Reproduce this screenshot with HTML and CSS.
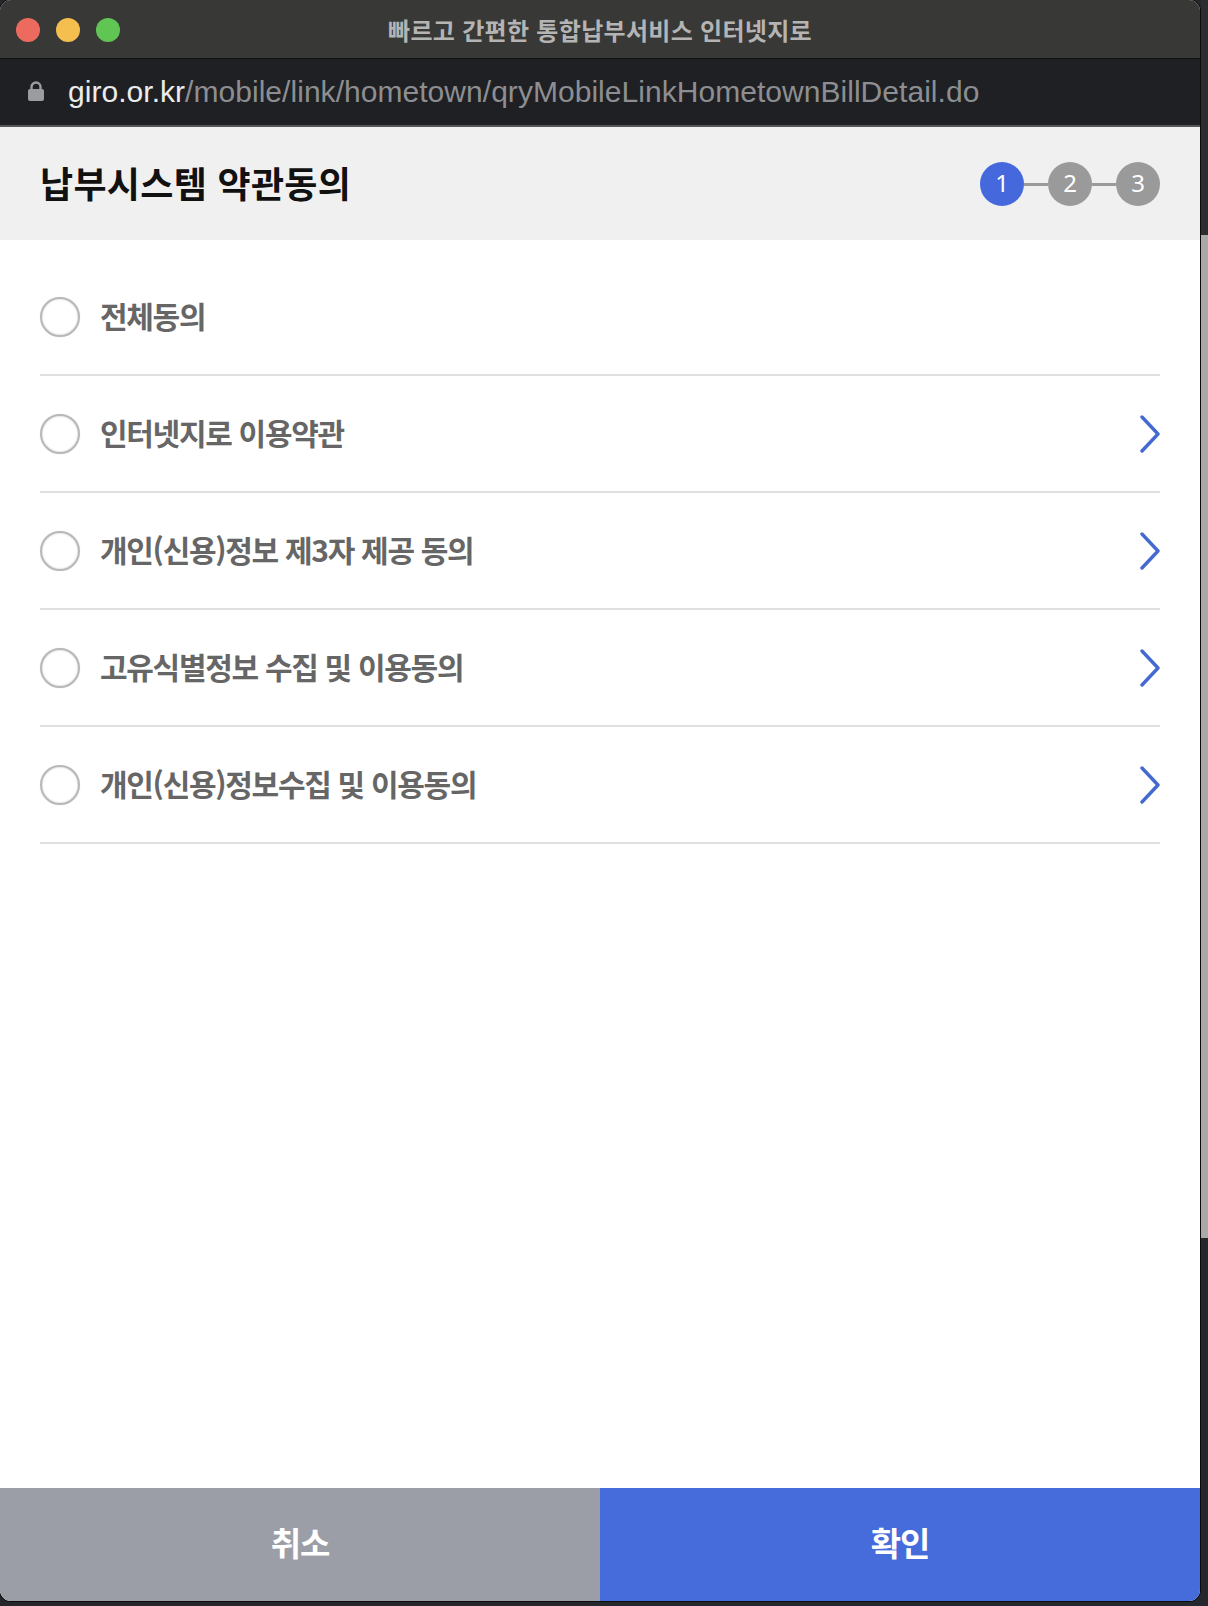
FILE: index.html
```html
<!DOCTYPE html>
<html lang="ko">
<head>
  <meta charset="utf-8">
  <meta name="viewport" content="width=device-width, initial-scale=1">
  <title>빠르고 간편한 통합납부서비스 인터넷지로</title>
  <link rel="stylesheet" href="styles.css">
</head>
<body>
  <div class="screen">
    <div class="window">
      <div class="titlebar">
        <div class="lights">
          <span class="light red"></span>
          <span class="light yellow"></span>
          <span class="light green"></span>
        </div>
        <div class="win-title">빠르고 간편한 통합납부서비스 인터넷지로</div>
      </div>
      <div class="addressbar">
        <svg class="lock" width="18" height="22" viewBox="0 0 18 22">
          <path d="M4.5 10 V7 a4.5 4.5 0 0 1 9 0 V10" fill="none" stroke="#9a9ca0" stroke-width="2.4"/>
          <rect x="1" y="9" width="16" height="12" rx="2" fill="#9a9ca0"/>
        </svg>
        <span class="url"><span class="host">giro.or.kr</span>/mobile/link/hometown/qryMobileLinkHometownBillDetail.do</span>
      </div>

      <div class="page">
        <div class="page-head">
          <h1>납부시스템 약관동의</h1>
          <div class="steps">
            <span class="step on">1</span>
            <span class="step-line"></span>
            <span class="step">2</span>
            <span class="step-line"></span>
            <span class="step">3</span>
          </div>
        </div>

        <ul class="terms">
          <li class="term">
            <span class="radio"></span>
            <span class="term-name">전체동의</span>
          </li>
          <li class="term">
            <span class="radio"></span>
            <span class="term-name">인터넷지로 이용약관</span>
            <svg class="arrow" width="20" height="38" viewBox="0 0 20 38"><polyline points="2,2 18,19 2,36" fill="none" stroke="#4469d0" stroke-width="3.4" stroke-linecap="round" stroke-linejoin="round"/></svg>
          </li>
          <li class="term">
            <span class="radio"></span>
            <span class="term-name">개인(신용)정보 제3자 제공 동의</span>
            <svg class="arrow" width="20" height="38" viewBox="0 0 20 38"><polyline points="2,2 18,19 2,36" fill="none" stroke="#4469d0" stroke-width="3.4" stroke-linecap="round" stroke-linejoin="round"/></svg>
          </li>
          <li class="term">
            <span class="radio"></span>
            <span class="term-name">고유식별정보 수집 및 이용동의</span>
            <svg class="arrow" width="20" height="38" viewBox="0 0 20 38"><polyline points="2,2 18,19 2,36" fill="none" stroke="#4469d0" stroke-width="3.4" stroke-linecap="round" stroke-linejoin="round"/></svg>
          </li>
          <li class="term">
            <span class="radio"></span>
            <span class="term-name">개인(신용)정보수집 및 이용동의</span>
            <svg class="arrow" width="20" height="38" viewBox="0 0 20 38"><polyline points="2,2 18,19 2,36" fill="none" stroke="#4469d0" stroke-width="3.4" stroke-linecap="round" stroke-linejoin="round"/></svg>
          </li>
        </ul>

        <div class="buttons">
          <button type="button" class="btn cancel">취소</button>
          <button type="button" class="btn ok">확인</button>
        </div>
      </div>
    </div>

    <div class="desk">
      <div class="desk-top"></div>
      <div class="desk-grey"></div>
      <div class="desk-bottom"></div>
    </div>
  </div>
</body>
</html>
```
FILE: styles.css
```css
html, body {
    margin: 0;
    padding: 0;
    background-color: #25272c;
}
body {
    font-family: "Noto Sans CJK KR", "Noto Sans", sans-serif;
    width: 1208px;
    height: 1606px;
    overflow: hidden;
}
.screen {
    display: flex;
    height: 1606px;
}
.window {
    width: 1200px;
    height: 1601px;
    display: flex;
    flex-direction: column;
    border-radius: 11px;
    overflow: hidden;
    box-shadow: 0 0 0 1px #0b0b0c;
    background-color: #fff;
    flex-shrink: 0;
}

/* window chrome */
.titlebar {
    height: 58px;
    background-color: #383836;
    border-bottom: 1px solid #121212;
    display: flex;
    align-items: center;
    position: relative;
    flex-shrink: 0;
}
.lights {
    display: flex;
    gap: 16px;
    padding-left: 16px;
    position: absolute;
    left: 0;
    top: 18px;
}
.light {
    width: 24px;
    height: 24px;
    border-radius: 50%;
}
.red { background-color: #ed6a5e; }
.yellow { background-color: #f5bf4f; }
.green { background-color: #61c554; }
.win-title {
    width: 100%;
    text-align: center;
    color: #b4b4b4;
    font-size: 24px;
    font-weight: bold;
    letter-spacing: 0.3px;
}
.addressbar {
    height: 66px;
    background-color: #1f2023;
    border-bottom: 2px solid #555658;
    display: flex;
    align-items: center;
    padding-left: 27px;
    flex-shrink: 0;
}
.lock {
    margin-top: -2px;
}
.url {
    margin-left: 23px;
    font-family: "Liberation Sans", "Noto Sans", sans-serif;
    font-size: 30px;
    color: #8d8e92;
    letter-spacing: 0.04px;
}
.host {
    color: #ececec;
}

/* page */
.page {
    flex: 1;
    display: flex;
    flex-direction: column;
}
.page-head {
    height: 113px;
    background-color: #f0f0f0;
    display: flex;
    align-items: center;
    justify-content: space-between;
    padding: 0 40px 0 40px;
    flex-shrink: 0;
}
.page-head h1 {
    margin: 0 0 4px;
    font-size: 36px;
    font-weight: bold;
    color: #111;
    letter-spacing: 0.3px;
}
.steps {
    display: flex;
    align-items: center;
    margin-top: 1px;
}
.step {
    width: 44px;
    height: 44px;
    border-radius: 50%;
    background-color: #9a9a9a;
    color: #fff;
    font-family: "Noto Sans", sans-serif;
    font-size: 24px;
    line-height: 42px;
    text-align: center;
}
.step.on {
    background-color: #4569dc;
}
.step-line {
    width: 24px;
    height: 3px;
    background-color: #9a9a9a;
}

.terms {
    list-style: none;
    margin: 0;
    padding: 19px 40px 0 40px;
    flex: 1;
}
.term {
    height: 115px;
    border-bottom: 2px solid #e0e0e0;
    display: flex;
    align-items: center;
}
.radio {
    width: 36px;
    height: 36px;
    border-radius: 50%;
    border: 2px solid #b8b8b8;
    box-shadow: inset 0 0 2px rgba(0, 0, 0, 0.25), 0 0 1px rgba(0, 0, 0, 0.2);
    flex-shrink: 0;
}
.term-name {
    margin: 0 0 4px 20px;
    font-size: 30px;
    font-weight: bold;
    color: #666;
    letter-spacing: -1.3px;
    flex: 1;
}

.buttons {
    display: flex;
    height: 113px;
    flex-shrink: 0;
}
.btn {
    flex: 1;
    border: none;
    margin: 0;
    padding: 0 0 5px;
    color: #fff;
    font-family: "Noto Sans CJK KR", sans-serif;
    font-size: 33px;
    font-weight: bold;
    letter-spacing: -1px;
}
.cancel {
    background-color: #9b9ea6;
}
.ok {
    background-color: #466bdb;
}

/* desktop behind the window */
.desk {
    width: 7px;
    margin-left: 1px;
    display: flex;
    flex-direction: column;
}
.desk-top {
    height: 235px;
    background-color: #2c2d30;
}
.desk-grey {
    height: 1003px;
    background-color: #a9a9a9;
}
.desk-bottom {
    flex: 1;
    background-color: #25272c;
}
```
